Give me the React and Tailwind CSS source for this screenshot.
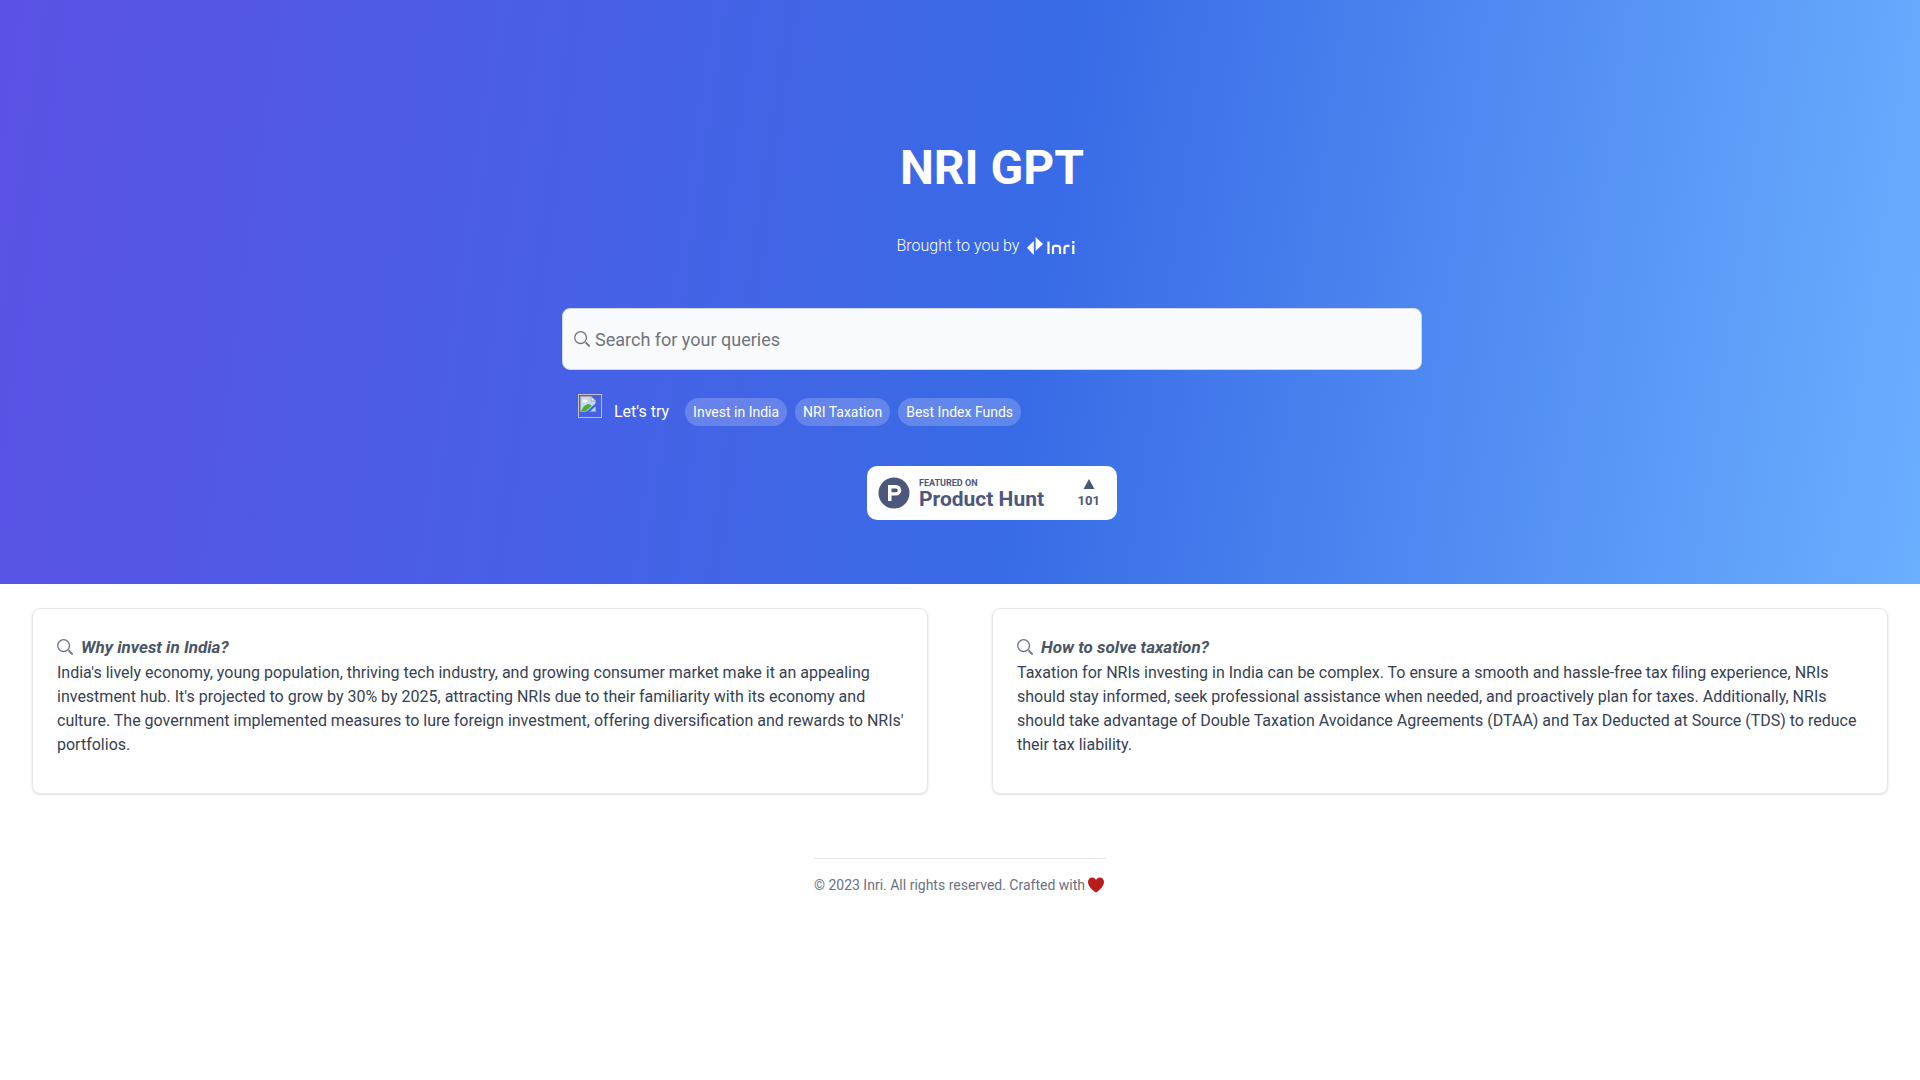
import React from "react";

function SearchIcon({ className }) {
  return (
    <svg viewBox="0 0 16 16" className={className} fill="none" stroke="currentColor" strokeWidth="1.3" aria-hidden="true">
      <circle cx="6.600" cy="6.600" r="5.900" />
      <path d="M11.600 11.400 L15.700 15.500" strokeWidth="1.800" />
    </svg>
  );
}

function InriLogo() {
  return (
    <span className="flex items-start gap-1" role="img" aria-label="Inri">
      <svg viewBox="0 0 16 18" className="h-[18px] w-4" fill="currentColor" aria-hidden="true">
        <path d="M0 10.800 L6.800 4 V18 Z" />
        <path d="M8.600 0 L16 7 L8.600 14 Z" />
      </svg>
      <svg viewBox="0 0 28 13" className="mt-1 h-[13px] w-7" fill="none" stroke="currentColor" strokeWidth="2.200" aria-hidden="true">
        <path d="M1.500 0.500 V13" />
        <path d="M6 13 V6.800 Q6 4.800 8 4.800 H10.500 Q13 4.800 13 7.300 V13" />
        <path d="M17.500 13 V7.300 Q17.500 4.800 20 4.800 H22.500" />
        <path d="M26.300 4 V13 M26.300 0 V2.400" />
      </svg>
    </span>
  );
}

function MissingImage() {
  return (
    <span className="block size-6 border border-[#c0c0c0] p-px" role="img" aria-label="Suggestions">
      <svg viewBox="0 0 16 16" className="size-4" aria-hidden="true">
        <path d="M0.500 0.500 H11 L15.500 5 V15.500 H0.500 Z" fill="#c5d8f6" stroke="#a5a5a5" />
        <path d="M11 0.500 V5 H15.500 Z" fill="#fff" stroke="#a5a5a5" />
        <ellipse cx="5" cy="5" rx="2.500" ry="1.400" fill="#fff" />
        <path d="M1 15 Q4 8.500 8 8 Q10 8 12 9.500 L6 15 Z" fill="#4caf3a" />
        <path d="M6 16 L16 7 V10 L9.500 16 Z" fill="#4264e6" />
      </svg>
    </span>
  );
}

const suggestions = ["Invest in India", "NRI Taxation", "Best Index Funds"];

const cards = [
  {
    title: "Why invest in India?",
    body: "India's lively economy, young population, thriving tech industry, and growing consumer market make it an appealing investment hub. It's projected to grow by 30% by 2025, attracting NRIs due to their familiarity with its economy and culture. The government implemented measures to lure foreign investment, offering diversification and rewards to NRIs' portfolios.",
  },
  {
    title: "How to solve taxation?",
    body: "Taxation for NRIs investing in India can be complex. To ensure a smooth and hassle-free tax filing experience, NRIs should stay informed, seek professional assistance when needed, and proactively plan for taxes. Additionally, NRIs should take advantage of Double Taxation Avoidance Agreements (DTAA) and Tax Deducted at Source (TDS) to reduce their tax liability.",
  },
];

function ProductHuntBadge() {
  return (
    <a href="#product-hunt" className="mt-10 flex h-[54px] w-[250px] items-center rounded-[10px] bg-white pl-[11px] pr-[17px] text-[#4b587c]">
      <svg viewBox="0 0 32 32" className="size-8 shrink-0" aria-hidden="true">
        <circle cx="16" cy="16" r="15.500" fill="#4b587c" />
        <path fill="#fff" fillRule="evenodd" d="M10 8 H18 A5.300 5.300 0 0 1 18 18.600 H13.500 V24 H10 Z M13.500 11.500 V15.200 H18 A1.850 1.850 0 0 0 18 11.500 Z" />
      </svg>
      <span className="ml-[9px] flex flex-col pt-0.5">
        <span className="text-[9px] leading-[9px] font-bold">FEATURED ON</span>
        <span className="text-[21px] leading-[22px] font-bold">Product Hunt</span>
      </span>
      <span className="ml-auto flex flex-col items-center gap-1 pt-0.5">
        <svg viewBox="0 0 12 10" className="h-[10px] w-3" fill="currentColor" aria-hidden="true">
          <path d="M6 0 L11.500 10 H0.500 Z" />
        </svg>
        <span className="text-[13px] leading-4 font-bold">101</span>
      </span>
    </a>
  );
}

export default function App() {
  return (
    <div className="min-h-screen bg-white font-[Roboto,sans-serif]">
      <header className="flex flex-col items-center bg-[linear-gradient(98deg,#5b52e4_0%,#386be6_54%,#6bafff_100%)] pt-[138px] pb-16 pl-16 text-white">
        <h1 className="text-5xl leading-[60px] font-bold">NRI GPT</h1>
        <p className="mt-9 flex items-center gap-2 pr-3 font-light">
          Brought to you by <InriLogo />
        </p>
        <div className="mt-[50px] w-full max-w-[860px]">
          <label className="flex h-[62px] items-center gap-[5px] rounded-lg border border-gray-300 bg-gray-50 pl-[11px] text-[#6f747c]">
            <SearchIcon className="size-4 shrink-0" />
            <input
              type="search"
              aria-label="Search for your queries"
              placeholder="Search for your queries"
              className="h-full min-w-0 flex-1 bg-transparent text-lg outline-none placeholder:text-[#6f747c]"
            />
          </label>
          <div className="mt-6 flex pl-4">
            <MissingImage />
            <div className="mt-1 flex items-center pl-3">
              <span className="mr-4">Let's try</span>
              <div className="flex gap-2">
                {suggestions.map((s) => (
                  <button key={s} type="button" className="h-7 rounded-full bg-white/20 px-2 text-sm">
                    {s}
                  </button>
                ))}
              </div>
            </div>
          </div>
        </div>
        <ProductHuntBadge />
      </header>

      <main className="grid grid-cols-2 gap-16 px-8 pt-6">
        {cards.map((c) => (
          <article key={c.title} className="rounded-lg border border-gray-200 pt-6 pr-5 pb-9 pl-6 shadow-sm">
            <h2 className="flex items-center gap-2 text-[17px] leading-7 font-bold text-gray-600 italic">
              <SearchIcon className="size-4 shrink-0 text-gray-500" />
              {c.title}
            </h2>
            <p className="text-base text-gray-700">{c.body}</p>
          </article>
        ))}
      </main>

      <footer className="mt-16 flex justify-center">
        <p className="flex items-center gap-[3px] border-t border-gray-200 pt-4 pr-0.5 text-sm text-gray-500">
          © 2023 Inri. All rights reserved. Crafted with
          <svg viewBox="0 0 16 16" className="size-4" role="img" aria-label="love">
            <path fill="#b91c1c" d="M8 15.500 C5 13.500 0 9.500 0 5 C0 2.500 1.900 0.500 4.200 0.500 C6 0.500 7.300 1.500 8 3 C8.700 1.500 10 0.500 11.800 0.500 C14.100 0.500 16 2.500 16 5 C16 9.500 11 13.500 8 15.500 Z" />
          </svg>
        </p>
      </footer>
    </div>
  );
}
